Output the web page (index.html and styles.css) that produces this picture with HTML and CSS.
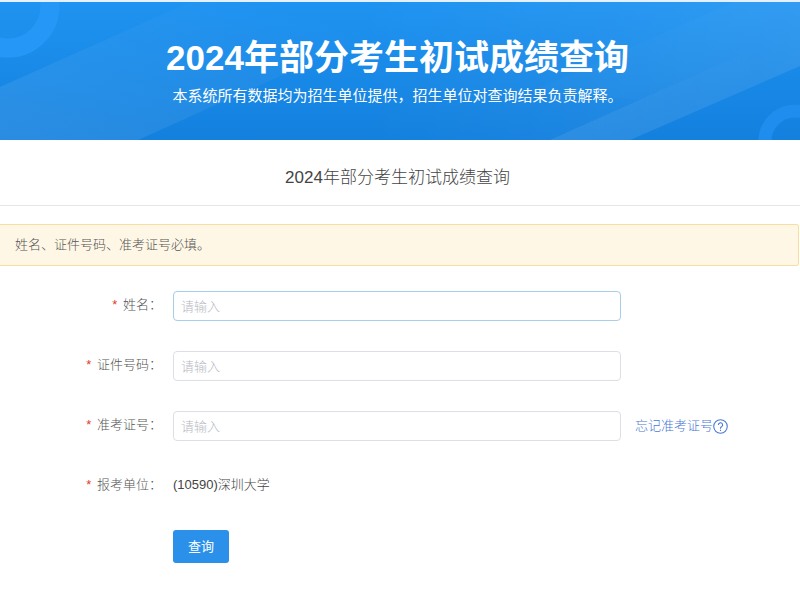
FILE: index.html
```html
<!DOCTYPE html>
<html lang="zh-CN">
<head>
    <meta charset="UTF-8">
    <meta name="viewport" content="width=device-width, initial-scale=1.0">
    <title>2024年部分考生初试成绩查询</title>
    <link rel="stylesheet" href="styles.css">
</head>
<body>

<header class="banner">
    <svg class="banner-bg" viewBox="0 0 800 138" preserveAspectRatio="none" aria-hidden="true">
        <defs>
            <linearGradient id="base" x1="0" y1="0" x2="0" y2="1">
                <stop offset="0" stop-color="#1f93f1"/>
                <stop offset="1" stop-color="#1380de"/>
            </linearGradient>
            <linearGradient id="left" x1="0" y1="1" x2="1" y2="0">
                <stop offset="0" stop-color="#fff" stop-opacity="0.1"/>
                <stop offset="0.8" stop-color="#fff" stop-opacity="0"/>
            </linearGradient>
            <linearGradient id="right" x1="0" y1="0" x2="1" y2="0">
                <stop offset="0" stop-color="#fff" stop-opacity="0"/>
                <stop offset="1" stop-color="#fff" stop-opacity="0.07"/>
            </linearGradient>
            <linearGradient id="edge" gradientUnits="userSpaceOnUse" x1="550" y1="0" x2="760" y2="0">
                <stop offset="0" stop-color="#fff" stop-opacity="0.08"/>
                <stop offset="1" stop-color="#fff" stop-opacity="0.02"/>
            </linearGradient>
        </defs>
        <rect width="800" height="138" fill="url(#base)"/>
        <polygon points="0,85 190,0 444,0 138,138 0,138" fill="url(#left)"/>
        <polygon points="360,0 800,0 800,64 630,138 360,138" fill="url(#right)"/>
        <polygon points="550,138 630,138 800,64 800,26" fill="url(#edge)"/>
        <polygon points="530,90 733,0 800,0 800,26 640,98" fill="#fff" fill-opacity="0.02"/>
        <circle cx="8" cy="4" r="42" fill="none" stroke="#2598f7" stroke-width="19"/>
        <circle cx="795" cy="139" r="30" fill="none" stroke="#1e8ded" stroke-width="13"/>
    </svg>
    <div class="banner-text">
        <h1>2024年部分考生初试成绩查询</h1>
        <p>本系统所有数据均为招生单位提供，招生单位对查询结果负责解释。</p>
    </div>
</header>

<main>
    <h2>2024年部分考生初试成绩查询</h2>
    <p class="tip">姓名、证件号码、准考证号必填。</p>

    <form class="query-form">
        <div class="form-item">
            <label for="xm"><span class="star">*</span> 姓名：</label>
            <input class="active" type="text" id="xm" placeholder="请输入">
        </div>
        <div class="form-item">
            <label for="zjhm"><span class="star">*</span> 证件号码：</label>
            <input type="text" id="zjhm" placeholder="请输入">
        </div>
        <div class="form-item">
            <label for="zkzh"><span class="star">*</span> 准考证号：</label>
            <input type="text" id="zkzh" placeholder="请输入">
            <a class="forget" href="#">忘记准考证号<svg width="15" height="15" viewBox="0 0 14 14" fill="none" stroke="currentColor" aria-hidden="true">
                <circle cx="7" cy="7" r="6.3"/>
                <path d="M5 5.6a2 2 0 1 1 3 1.7c-.7.4-1 .7-1 1.4v.3M7 10v1.1"/>
            </svg></a>
        </div>
        <div class="form-item">
            <label for="dwmc"><span class="star">*</span> 报考单位：</label>
            <output id="dwmc">(10590)深圳大学</output>
        </div>
        <button type="submit">查询</button>
    </form>
</main>

</body>
</html>
```
FILE: styles.css
```css
body {
    margin: 0;
    background-color: #fff;
    color: #444;
    font-family: "Liberation Sans", Arial, "Noto Sans CJK SC", sans-serif;
    font-size: 13px;
    font-weight: 300;
}
.banner {
    position: relative;
    border-top: 2px solid #e4f1fc;
    color: #fff;
    text-align: center;
}
.banner-bg {
    position: absolute;
    top: 0;
    left: 0;
    width: 100%;
    height: 100%;
}
.banner-text {
    position: relative;
    padding: 35px 5px 33px 0;
}
h1 {
    margin: 0;
    font-size: 35px;
    line-height: 42px;
    font-weight: bold;
}
p {
    margin: 0;
}
.banner-text p {
    margin-top: 6px;
    font-size: 15px;
    line-height: 22px;
    font-weight: normal;
}
h2 {
    margin: 0;
    padding: 26px 5px 15px 0;
    border-bottom: 1px solid #e6e6e6;
    font-size: 17px;
    line-height: 24px;
    font-weight: 300;
    text-align: center;
}
.tip {
    margin: 18px 1px 0 0;
    padding: 10px 15px;
    border: 1px solid #f7dfa0;
    border-left: none;
    border-radius: 0 3px 3px 0;
    background-color: #fff7e6;
    color: #555;
    line-height: 20px;
}
.query-form {
    padding-top: 25px;
}
.form-item {
    display: flex;
    height: 30px;
    margin-bottom: 30px;
    line-height: 28px;
}
label {
    box-sizing: border-box;
    width: 173px;
    padding-right: 11px;
    color: #555;
    text-align: right;
}
.star {
    margin-right: 2px;
    color: #e03c2c;
}
input {
    box-sizing: border-box;
    width: 56%;
    height: 30px;
    padding: 0 7px;
    border: 1px solid #dcdfe6;
    border-radius: 4px;
    color: #444;
    font: inherit;
    outline: none;
}
input::placeholder {
    color: #b4b8c0;
}
input.active,
input:focus {
    border-color: #a6cdea;
}
.forget {
    display: flex;
    align-items: center;
    margin-left: 14px;
    color: #4a78d4;
    text-decoration: none;
}
button {
    display: block;
    height: 33px;
    margin: -1px 0 0 173px;
    padding: 0 15px 2px;
    border: none;
    border-radius: 3px;
    background-color: #2a90e9;
    color: #fff;
    font: inherit;
    font-weight: normal;
    cursor: pointer;
}
button:hover {
    background-color: #1c80d8;
}
```
